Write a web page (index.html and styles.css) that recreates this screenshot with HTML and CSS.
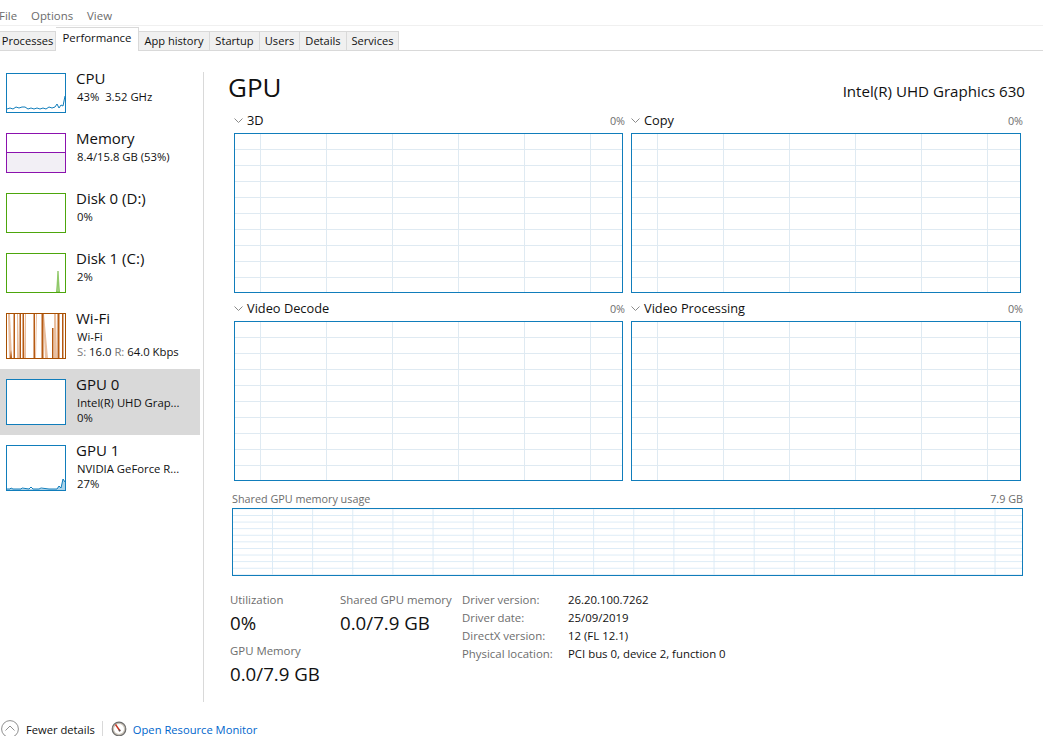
FILE: index.html
```html
<!DOCTYPE html>
<html lang="en">
<head>
<meta charset="utf-8">
<title>Task Manager</title>
<link rel="stylesheet" href="styles.css">
</head>
<body>
<div class="app">
  <nav class="menu"><span>File</span><span>Options</span><span>View</span></nav>
  <div class="tabs">
    <span class="tab">Processes</span>
    <span class="tab tab-active">Performance</span>
    <span class="tab">App history</span>
    <span class="tab">Startup</span>
    <span class="tab">Users</span>
    <span class="tab">Details</span>
    <span class="tab">Services</span>
  </div>
  <div class="content">
    <aside class="sidebar">
      <div class="row">
        <svg class="thumb thumb-cpu" viewBox="0 0 58 38" preserveAspectRatio="none"><polyline class="line-blue" points="0,35 3,34 6,35 9,33 12,34 15,33 18,33 21,35 24,34 27,35 30,34 33,35 36,34 39,35 42,33 45,34 48,33 50,30 52,34 54,31 56,32 58,22"/></svg>
        <div class="info"><div class="title">CPU</div><div class="sub">43%&nbsp; 3.52 GHz</div></div>
      </div>
      <div class="row">
        <svg class="thumb thumb-mem" viewBox="0 0 58 38" preserveAspectRatio="none"><rect class="mem-fill" x="0" y="18" width="58" height="20"/><line class="mem-line" x1="0" y1="18.5" x2="58" y2="18.5"/></svg>
        <div class="info"><div class="title">Memory</div><div class="sub">8.4/15.8 GB (53%)</div></div>
      </div>
      <div class="row">
        <svg class="thumb thumb-disk" viewBox="0 0 58 38" preserveAspectRatio="none"></svg>
        <div class="info"><div class="title">Disk 0 (D:)</div><div class="sub">0%</div></div>
      </div>
      <div class="row">
        <svg class="thumb thumb-disk" viewBox="0 0 58 38" preserveAspectRatio="none"><polygon class="disk-spike" points="49.5,38 51,17 52.5,38"/></svg>
        <div class="info"><div class="title">Disk 1 (C:)</div><div class="sub">2%</div></div>
      </div>
      <div class="row row-tall">
        <svg class="thumb thumb-tall thumb-wifi" viewBox="0 0 58 44" preserveAspectRatio="none">
          <polygon class="wifi-soft" points="1,0 3,0 5,44 2,44"/>
          <polygon class="wifi-soft" points="10,0 11,0 12,44 10,44"/>
          <polygon class="wifi-soft" points="18,0 19,0 19,44 17,44"/>
          <polygon class="wifi-soft" points="29,0 30,0 29,44 28,44"/>
          <polygon class="wifi-soft" points="36,0 37,0 41,44 38,44"/>
          <polygon class="wifi-soft" points="47,0 49,0 50,44 47,44"/>
          <rect class="wifi-dark" x="6.5" y="0" width="1.5" height="44"/>
          <rect class="wifi-dark" x="12.5" y="0" width="1.5" height="44"/>
          <rect class="wifi-dark" x="15.5" y="0" width="1.5" height="44"/>
          <rect class="wifi-dark" x="26.5" y="0" width="1.5" height="44"/>
          <rect class="wifi-dark" x="34.5" y="0" width="2" height="44"/>
          <rect class="wifi-dark" x="45" y="14" width="1.5" height="30"/>
          <rect class="wifi-dark" x="50.5" y="0" width="2" height="44"/>
          <rect class="wifi-dark" x="55" y="0" width="1.5" height="44"/>
          <polygon class="wifi-dark" points="3,44 4,36 5,44"/>
        </svg>
        <div class="info"><div class="title">Wi-Fi</div><div class="sub">Wi-Fi</div><div class="sub sub-last"><span class="dim">S:</span> 16.0 <span class="dim">R:</span> 64.0 Kbps</div></div>
      </div>
      <div class="row row-tall row-selected">
        <svg class="thumb thumb-tall thumb-gpu" viewBox="0 0 58 44" preserveAspectRatio="none"></svg>
        <div class="info"><div class="title">GPU 0</div><div class="sub">Intel(R) UHD Grap...</div><div class="sub sub-last">0%</div></div>
      </div>
      <div class="row row-tall">
        <svg class="thumb thumb-tall thumb-gpu" viewBox="0 0 58 44" preserveAspectRatio="none"><polygon class="gpu-fill" points="0,44 0,43 50,43 52,40 54,42 56,33 58,36 58,44"/><polyline class="line-blue" points="0,43 3,43 4,42 6,43 14,43 15,42 22,43 24,41 26,43 32,43 34,42 42,43 50,43 52,40 54,42 56,33 58,36"/></svg>
        <div class="info"><div class="title">GPU 1</div><div class="sub">NVIDIA GeForce R...</div><div class="sub sub-last">27%</div></div>
      </div>
    </aside>
    <main class="main">
      <header class="head"><h1>GPU</h1><div class="adapter">Intel(R) UHD Graphics 630</div></header>
      <section class="graphs">
        <div class="graph">
          <div class="graph-label"><span class="name"><svg class="chev" viewBox="0 0 9 5"><polyline points="0.5,0.5 4.5,4.5 8.5,0.5"/></svg>3D</span><span class="pct">0%</span></div>
          <div class="plot"></div>
        </div>
        <div class="graph">
          <div class="graph-label"><span class="name"><svg class="chev" viewBox="0 0 9 5"><polyline points="0.5,0.5 4.5,4.5 8.5,0.5"/></svg>Copy</span><span class="pct">0%</span></div>
          <div class="plot"></div>
        </div>
        <div class="graph">
          <div class="graph-label"><span class="name"><svg class="chev" viewBox="0 0 9 5"><polyline points="0.5,0.5 4.5,4.5 8.5,0.5"/></svg>Video Decode</span><span class="pct">0%</span></div>
          <div class="plot"></div>
        </div>
        <div class="graph">
          <div class="graph-label"><span class="name"><svg class="chev" viewBox="0 0 9 5"><polyline points="0.5,0.5 4.5,4.5 8.5,0.5"/></svg>Video Processing</span><span class="pct">0%</span></div>
          <div class="plot"></div>
        </div>
      </section>
      <section class="shared">
        <div class="shared-label"><span>Shared GPU memory usage</span><span>7.9 GB</span></div>
        <div class="shared-plot"></div>
      </section>
      <section class="stats">
        <div class="stat-col stat-col-a">
          <div class="stat"><div class="stat-label">Utilization</div><div class="stat-value">0%</div></div>
          <div class="stat stat-next"><div class="stat-label">GPU Memory</div><div class="stat-value">0.0/7.9 GB</div></div>
        </div>
        <div class="stat-col stat-col-b">
          <div class="stat"><div class="stat-label">Shared GPU memory</div><div class="stat-value">0.0/7.9 GB</div></div>
        </div>
        <dl class="props">
          <dt>Driver version:</dt><dd>26.20.100.7262</dd>
          <dt>Driver date:</dt><dd>25/09/2019</dd>
          <dt>DirectX version:</dt><dd>12 (FL 12.1)</dd>
          <dt>Physical location:</dt><dd>PCI bus 0, device 2, function 0</dd>
        </dl>
      </section>
    </main>
  </div>
  <footer class="footer">
    <span class="fewer">
      <svg class="circle" viewBox="0 0 18 18"><circle cx="9" cy="9" r="8.4"/><polyline points="4.5,10.5 9,6 13.5,10.5"/></svg>
      Fewer details
    </span>
    <span class="divider"></span>
    <svg class="monitor" viewBox="0 0 16 16"><circle class="mon-ring" cx="8" cy="8" r="6.8"/><circle class="mon-face" cx="8" cy="8" r="5"/><line class="mon-needle" x1="4.5" y1="3.5" x2="9" y2="10"/><circle class="mon-hub" cx="8.6" cy="9.4" r="1"/></svg>
    <a class="link">Open Resource Monitor</a>
  </footer>
</div>
</body>
</html>
```
FILE: styles.css
```css
* { box-sizing: border-box; }
html, body { margin: 0; padding: 0; height: 100%; overflow: hidden; background: #fff; }
body { font-family: "Open Sans", "Noto Sans", "Liberation Sans", sans-serif; font-size: 11.4px; color: #111; }
.app { width: 1043px; height: 736px; overflow: hidden; }

.menu { display: flex; gap: 14px; height: 26px; padding-top: 8px; line-height: 16px; margin-left: -1px; color: #6b6b6b; border-bottom: 1px solid #f0f0f0; }

.tabs { display: grid; grid-template-columns: 56px 83px 71px 50px 40px 47px 52px; height: 25px; align-items: end; border-bottom: 1px solid #d9d9d9; }
.tab { height: 20px; margin-bottom: -1px; background: #f0f0f0; border: 1px solid #d9d9d9; border-left: 0; font-size: 11.1px; line-height: 18px; text-align: center; white-space: nowrap; overflow: hidden; }
.tab-active { height: 24px; font-size: 11.4px; background: #fff; border-top: 1px solid #d9d9d9; border-bottom: 0; line-height: 19px; padding-bottom: 3px; }

.content { display: flex; height: 652px; }
.sidebar { width: 204px; flex: none; padding-top: 12px; position: relative; }
.sidebar::after { content: ""; display: block; position: absolute; right: 0; top: 21px; bottom: 1px; width: 1px; background: #d9d9d9; }

.row { width: 200px; height: 60px; display: flex; padding: 10px 0 0 6px; gap: 10px; }
.row-tall { height: 66px; }
.row-selected { background: #d9d9d9; }
.thumb { width: 60px; height: 40px; flex: none; background: #fff; border: 1px solid; }
.thumb-tall { height: 46px; }
.thumb-cpu, .thumb-gpu { border-color: #117dbb; }
.thumb-mem { border-color: #8b12ae; }
.thumb-disk { border-color: #4da60c; }
.thumb-wifi { border-color: #a74f01; }
.line-blue { fill: none; stroke: #117dbb; stroke-width: 1; vector-effect: non-scaling-stroke; }
.mem-fill { fill: #f2eff5; }
.mem-line { stroke: #8b12ae; stroke-width: 1; }
.disk-spike { fill: #a6d488; stroke: #4da60c; stroke-width: .5; }
.wifi-soft { fill: #e9bfa0; }
.wifi-dark { fill: #b65a12; }
.gpu-fill { fill: #a9d3ea; }

.info { margin-top: -5px; min-width: 0; white-space: nowrap; }
.title { font-size: 15px; line-height: 20px; color: #111; }
.sub { line-height: 16px; color: #111; padding-left: 1px; margin-top: 1px; font-size: 11.3px; }
.sub-last { margin-top: -1px; }
.dim { color: #777; }

.main { flex: 1; padding: 18px 18px 0 24px; min-width: 0; }
.head { display: flex; justify-content: space-between; align-items: flex-start; height: 43px; }
h1 { margin: 0; font-size: 26px; font-weight: 400; line-height: 36px; color: #111; }
.adapter { font-size: 15.1px; line-height: 20px; margin-top: 12px; color: #111; }

.graphs { display: grid; grid-template-columns: 389px 390px; column-gap: 8px; row-gap: 7px; margin-left: 6px; }
.graph-label { display: flex; justify-content: space-between; align-items: center; height: 16px; margin-bottom: 5px; margin-right: -2px; }
.name { display: inline-flex; align-items: center; font-size: 12.8px; }
.chev { width: 9px; height: 5px; margin-right: 4px; fill: none; stroke: #8a8a8a; stroke-width: 1; }
.pct { font-size: 10.8px; color: #6d6d6d; }
.plot { height: 160px; border: 1px solid #117dbb; background-image: linear-gradient(to right, #dfeaf2 1px, transparent 1px), linear-gradient(to bottom, #dfeaf2 1px, transparent 1px); background-size: 66px 16px; background-position: 25px 15px; }

.shared { margin: 10px 0 0 4px; width: 791px; }
.shared-label { display: flex; justify-content: space-between; height: 16px; line-height: 16px; margin-bottom: 1px; font-size: 10.8px; color: #6d6d6d; }
.shared-plot { height: 68px; border: 1px solid #117dbb; background-image: linear-gradient(to right, #dcebf6 1px, transparent 1px), linear-gradient(to bottom, #dcebf6 1px, transparent 1px); background-size: 40.15px 6.6px; background-position: 39px 6px; }

.stats { display: flex; margin: 16px 0 0 2px; }
.stat-col-a { width: 110px; }
.stat-col-b { width: 122px; }
.stat-label { line-height: 16px; color: #6d6d6d; }
.stat-value { font-size: 18.7px; line-height: 24px; margin-top: 3px; color: #111; }
.stat-next { margin-top: 8px; }
.props { display: grid; grid-template-columns: 106px auto; grid-auto-rows: 18px; margin: -1px 0 0; line-height: 18px; }
.props dt { color: #6d6d6d; }
.props dd { margin: 0; color: #111; }

.footer { display: flex; align-items: center; height: 30px; padding: 2px 0 0 1px; margin-top: 10px; white-space: nowrap; font-size: 11.2px; }
.fewer { display: inline-flex; align-items: center; gap: 7px; color: #111; }
.circle { width: 18px; height: 18px; fill: none; stroke: #8f8f8f; stroke-width: 1; }
.divider { width: 1px; height: 16px; background: #d9d9d9; margin: 0 8px 0 7px; }
.monitor { width: 16px; height: 16px; margin-right: 6px; }
.mon-ring { fill: #c9c2b6; stroke: #6d6d6d; stroke-width: 1.2; }
.mon-face { fill: #fff; }
.mon-needle { stroke: #c8321f; stroke-width: 1.4; }
.mon-hub { fill: #555; }
.link { color: #0066cc; }
```
